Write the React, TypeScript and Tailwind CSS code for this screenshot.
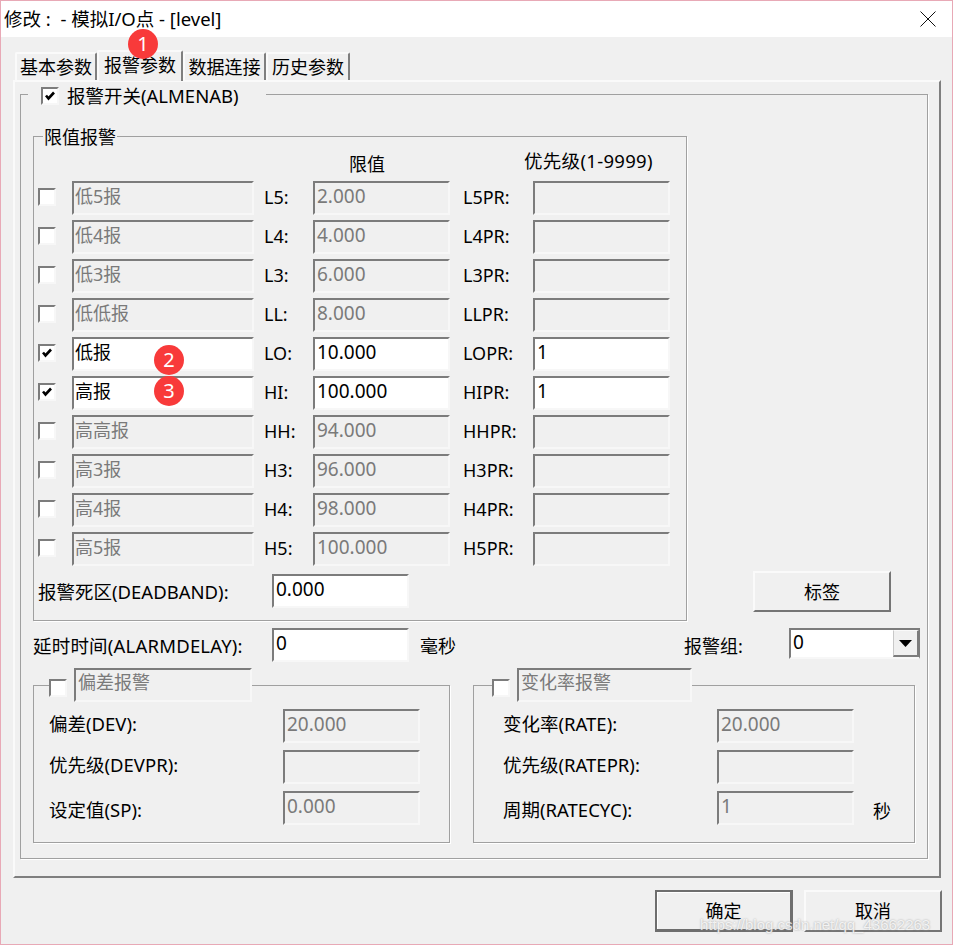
const FONT = "[font-family:'Noto_Sans','Noto_Sans_CJK_SC',sans-serif]";

const SUNKEN = "border-2 border-t-[#7c7c7c] border-l-[#7c7c7c] border-r-[#f7f7f7] border-b-[#f7f7f7]";
const RAISED = "border-2 border-t-[#fafafa] border-l-[#fafafa] border-r-[#757575] border-b-[#757575]";

const ROWS = [
  { on: false, name: "低5报", tag: "L5:", value: "2.000", pr: "L5PR:", prValue: "" },
  { on: false, name: "低4报", tag: "L4:", value: "4.000", pr: "L4PR:", prValue: "" },
  { on: false, name: "低3报", tag: "L3:", value: "6.000", pr: "L3PR:", prValue: "" },
  { on: false, name: "低低报", tag: "LL:", value: "8.000", pr: "LLPR:", prValue: "" },
  { on: true, name: "低报", tag: "LO:", value: "10.000", pr: "LOPR:", prValue: "1" },
  { on: true, name: "高报", tag: "HI:", value: "100.000", pr: "HIPR:", prValue: "1" },
  { on: false, name: "高高报", tag: "HH:", value: "94.000", pr: "HHPR:", prValue: "" },
  { on: false, name: "高3报", tag: "H3:", value: "96.000", pr: "H3PR:", prValue: "" },
  { on: false, name: "高4报", tag: "H4:", value: "98.000", pr: "H4PR:", prValue: "" },
  { on: false, name: "高5报", tag: "H5:", value: "100.000", pr: "H5PR:", prValue: "" },
];

function Field({ value, width, enabled, cjk }: { value: string; width: string; enabled?: boolean; cjk?: boolean }) {
  return (
    <div
      className={`${width} h-[34px] shrink-0 pt-[1px] leading-[24px] ${cjk ? "pl-[1px] text-[18px]" : "pl-[2px] text-[19px]"} ${SUNKEN} ${
        enabled ? "bg-white text-black" : "bg-[#f0f0f0] text-[#7a7a7a]"
      }`}
    >
      {value}
    </div>
  );
}

function Check({ on }: { on?: boolean }) {
  return (
    <div className={`flex h-[18px] w-[18px] shrink-0 items-center justify-center bg-white ${SUNKEN}`}>
      {on && (
        <svg width="12" height="12" viewBox="0 0 12 12">
          <path d="M2 5.5 L4.5 8.5 L10 2.5" fill="none" stroke="#000" strokeWidth="2.6" />
        </svg>
      )}
    </div>
  );
}

function Badge({ n, className }: { n: number; className: string }) {
  return (
    <div
      className={`absolute z-20 flex h-[30px] w-[30px] items-center justify-center rounded-full bg-[#f83a3a] text-[20px] text-white ${className}`}
    >
      {n}
    </div>
  );
}

function Tab({ label, active, width }: { label: string; active?: boolean; width: string }) {
  return (
    <div
      className={`${width} flex items-center justify-center rounded-t-[2px] border-t-2 border-l-2 border-t-[#fafafa] border-l-[#fafafa] border-r-2 border-r-[#7f7f7f] bg-[#f0f0f0] text-[18px] ${
        active ? "relative z-10 -mb-[1px] h-[31px] pb-[3px]" : "h-[28px]"
      }`}
    >
      {label}
    </div>
  );
}

function Btn({ label, width, height }: { label: string; width: string; height: string }) {
  return <div className={`${width} ${height} flex items-center justify-center text-[18px] text-black ${RAISED}`}>{label}</div>;
}

function SideGroup({
  width,
  legend,
  legendWidth,
  checkLeft,
  fieldLeft,
  rows,
  trailing,
}: {
  width: string;
  legend: string;
  legendWidth: string;
  checkLeft: string;
  fieldLeft: string;
  rows: { label: string; value: string; labelClass: string }[];
  trailing?: string;
}) {
  return (
    <div className={`${width} relative h-[158px] border border-[#a0a0a0] shadow-[1px_1px_0_#fff]`}>
      <div className={`absolute top-[-18px] flex items-start gap-[7px] bg-[#f0f0f0] ${checkLeft}`}>
        <div className="pt-[11px]">
          <Check />
        </div>
        <div className={`${legendWidth} h-[34px] bg-[#f0f0f0] pl-[2px] text-[18px] leading-[24px] text-[#7a7a7a] ${SUNKEN}`}>
          {legend}
        </div>
      </div>
      <div className={`${fieldLeft} flex flex-col gap-[7px] pt-[23px]`}>
        {rows.map((r) => (
          <div key={r.label} className="flex h-[34px] items-start justify-between">
            <span className={r.labelClass}>{r.label}</span>
            <div className="flex items-start">
              <Field value={r.value} width="w-[137px]" />
              {trailing && (
                <span className="mt-[7px] w-[37px] pl-[19px] text-[18px]">{r.value === "1" ? trailing : ""}</span>
              )}
            </div>
          </div>
        ))}
      </div>
    </div>
  );
}

export default function App() {
  return (
    <div
      className={`${FONT} relative flex h-[945px] w-[953px] flex-col overflow-hidden border border-[#e8a9b6] bg-[#f0f0f0] text-[18.5px] leading-[26px] text-black`}
    >
      {/* title bar */}
      <div className="flex h-[36px] shrink-0 items-center justify-between bg-white pl-[3px] pr-[16px]">
        <span className="whitespace-pre">修改 :  - 模拟I/O点 - [level]</span>
        <svg width="16" height="16" viewBox="0 0 16 16">
          <path d="M0.5 0.5 L15.5 15.5 M15.5 0.5 L0.5 15.5" stroke="#111" strokeWidth="1" />
        </svg>
      </div>

      {/* tabs */}
      <div className="ml-[14px] mt-[13px] flex h-[30px] items-end">
        <Tab label="基本参数" width="w-[82px]" />
        <Tab label="报警参数" width="w-[86px]" active />
        <Tab label="数据连接" width="w-[83px]" />
        <Tab label="历史参数" width="w-[84px]" />
      </div>

      {/* tab page */}
      <div className="ml-[12px] h-[798px] w-[928px] border-2 border-t-[#fafafa] border-l-[#fafafa] border-r-[#7f7f7f] border-b-[#7f7f7f] pl-[5px] pt-[12px]">
        <div className="relative h-[765px] w-[908px] border border-[#a0a0a0] pl-[12px] pt-[41px] shadow-[1px_1px_0_#fff]">
          <div className="absolute left-[7px] top-[-12px] flex items-center gap-[8px] bg-[#f0f0f0] pl-[13px] pr-[27px]">
            <Check on />
            <span>报警开关(ALMENAB)</span>
          </div>

          <div className="flex items-end">
            {/* limit alarms */}
            <div className="relative h-[485px] w-[654px] border border-[#a0a0a0] pl-[4px] shadow-[1px_1px_0_#fff]">
              <span className="absolute left-[9px] top-[-13px] bg-[#f0f0f0] px-[1px] text-[18px]">限值报警</span>
              <div className="flex h-[44px] items-start">
                <span className="ml-[311px] mt-[14px] text-[18px]">限值</span>
                <span className="ml-[139px] mt-[11px] tracking-[0.3px]">优先级(1-9999)</span>
              </div>
              <div className="flex flex-col gap-[5px]">
                {ROWS.map((r) => (
                  <div key={r.tag} className="flex h-[34px] items-center">
                    <div className="-mt-[2px]">
                      <Check on={r.on} />
                    </div>
                    <div className="ml-[16px]">
                      <Field value={r.name} width="w-[182px]" enabled={r.on} cjk />
                    </div>
                    <span className="-mt-[3px] ml-[10px] w-[49px] text-[18px]">{r.tag}</span>
                    <Field value={r.value} width="w-[137px]" enabled={r.on} />
                    <span className="-mt-[3px] ml-[13px] w-[70px] text-[18px]">{r.pr}</span>
                    <Field value={r.prValue} width="w-[137px]" enabled={r.on} />
                  </div>
                ))}
              </div>
              <div className="mt-[8px] flex h-[34px] items-center">
                <span className="w-[234px] pt-[2px]">报警死区(DEADBAND):</span>
                <Field value="0.000" width="w-[137px]" enabled />
              </div>
            </div>
            <div className="mb-[9px] ml-[66px]">
              <Btn label="标签" width="w-[138px]" height="h-[41px]" />
            </div>
          </div>

          {/* delay + alarm group */}
          <div className="mt-[7px] flex h-[34px] items-center">
            <span className="w-[239px] pt-[2px] tracking-[0.2px]">延时时间(ALARMDELAY):</span>
            <Field value="0" width="w-[137px]" enabled />
            <span className="ml-[11px] w-[264px] pt-[2px] text-[18px]">毫秒</span>
            <span className="w-[105px] pt-[2px] text-[18px]">报警组:</span>
            <div className="flex h-[31px] w-[131px] justify-between self-start border-2 border-r-[1px] border-[#7c7c7c] border-b-[#f7f7f7] bg-white pl-[2px] text-[19px] leading-[24px]">
              <span>0</span>
              <div className="flex h-[27px] w-[26px] items-center justify-center border-r-2 border-b-2 border-l border-t border-r-[#7c7c7c] border-b-[#7c7c7c] border-l-[#c8c8c8] border-t-[#fafafa] bg-[#f0f0f0]">
                <svg width="13" height="7" viewBox="0 0 13 7">
                  <path d="M0 0 H13 L6.5 7 Z" fill="#000" />
                </svg>
              </div>
            </div>
          </div>

          {/* deviation + rate */}
          <div className="mt-[23px] flex gap-[23px]">
            <SideGroup
              width="w-[417px]"
              legend="偏差报警"
              legendWidth="w-[178px]"
              checkLeft="left-[15px]"
              fieldLeft="pl-[15px] pr-[29px]"
              rows={[
                { label: "偏差(DEV):", value: "20.000", labelClass: "mt-[2px]" },
                { label: "优先级(DEVPR):", value: "", labelClass: "mt-[2px]" },
                { label: "设定值(SP):", value: "0.000", labelClass: "mt-[6px]" },
              ]}
            />
            <SideGroup
              width="w-[442px]"
              legend="变化率报警"
              legendWidth="w-[175px]"
              checkLeft="left-[18px]"
              fieldLeft="pl-[29px] pr-[23px]"
              rows={[
                { label: "变化率(RATE):", value: "20.000", labelClass: "mt-[2px]" },
                { label: "优先级(RATEPR):", value: "", labelClass: "mt-[2px]" },
                { label: "周期(RATECYC):", value: "1", labelClass: "mt-[6px]" },
              ]}
              trailing="秒"
            />
          </div>
        </div>
      </div>

      {/* dialog buttons */}
      <div className="ml-[654px] mt-[12px] flex gap-[11px] text-[18px]">
        <div className="flex h-[42px] w-[138px] items-center justify-center border-t-2 border-l-2 border-r-[3px] border-b-[3px] border-[#6e6e6e] shadow-[inset_1px_1px_0_#fff]">
          确定
        </div>
        <Btn label="取消" width="w-[138px]" height="h-[42px]" />
      </div>

      <Badge n={1} className="left-[127px] top-[28px]" />
      <Badge n={2} className="left-[153px] top-[344px]" />
      <Badge n={3} className="left-[153px] top-[375px]" />

      <span className="absolute left-[699px] top-[911px] z-20 text-[15px] text-[#ffffff]/80 [font-family:'Liberation_Sans',sans-serif] [text-shadow:0_0_2px_#999]">
        https://blog.csdn.net/qq_43662263
      </span>
    </div>
  );
}
